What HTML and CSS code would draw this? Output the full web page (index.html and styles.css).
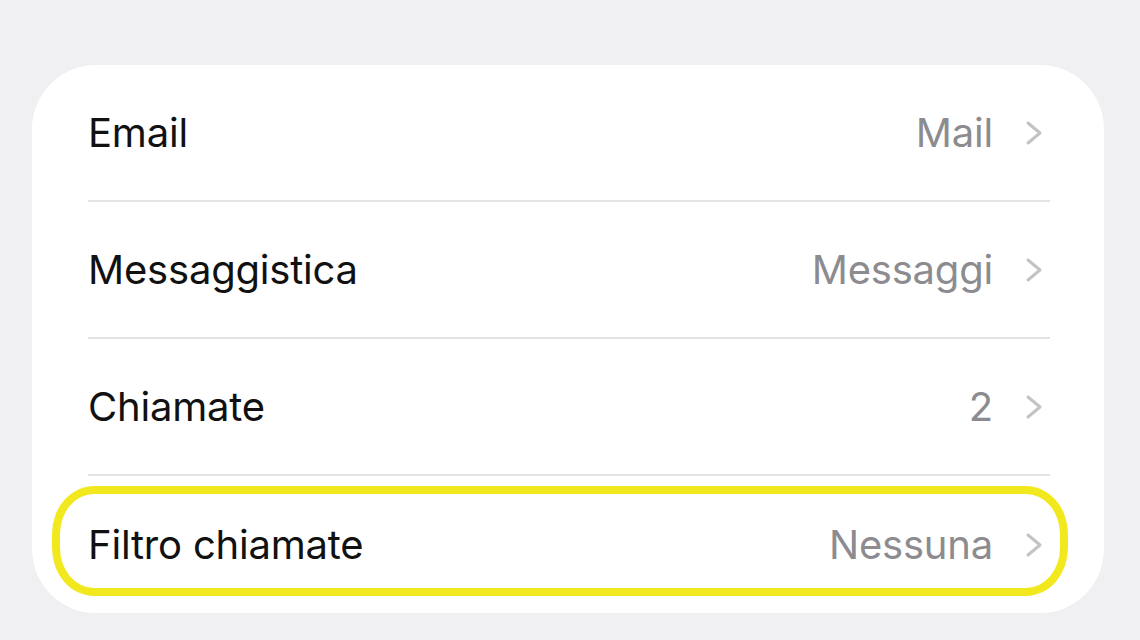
FILE: index.html
```html
<!DOCTYPE html>
<html lang="it">
<head>
<meta charset="utf-8">
<link rel="stylesheet" href="styles.css">
</head>
<body>
<div class="card">
  <div class="row">
    <span class="label">Email</span>
    <span class="value">Mail</span>
    <svg class="chev" viewBox="0 0 18 26"><path d="M3 3 L15 13 L3 23"/></svg>
  </div>
  <div class="row">
    <span class="label">Messaggistica</span>
    <span class="value">Messaggi</span>
    <svg class="chev" viewBox="0 0 18 26"><path d="M3 3 L15 13 L3 23"/></svg>
  </div>
  <div class="row">
    <span class="label">Chiamate</span>
    <span class="value">2</span>
    <svg class="chev" viewBox="0 0 18 26"><path d="M3 3 L15 13 L3 23"/></svg>
  </div>
  <div class="row last">
    <span class="label">Filtro chiamate</span>
    <span class="value">Nessuna</span>
    <svg class="chev" viewBox="0 0 18 26"><path d="M3 3 L15 13 L3 23"/></svg>
    <div class="highlight"></div>
  </div>
</div>
</body>
</html>
```
FILE: styles.css
```css
html, body {
  margin: 0;
  padding: 0;
  background: #f0f0f3;
  width: 1140px;
  height: 640px;
  overflow: hidden;
}
body {
  font-family: Inter, "Noto Sans", sans-serif;
  padding-top: 65px;
  box-sizing: border-box;
}
.card {
  margin-left: 32px;
  width: 1072px;
  background: #fff;
  border-radius: 64px;
  padding-left: 56px;
  padding-right: 54px;
  box-sizing: border-box;
}
.row {
  position: relative;
  height: 135px;
  display: flex;
  align-items: center;
  padding-right: 7px;
  border-bottom: 2px solid #e3e3e6;
}
.row.last {
  border-bottom: none;
  height: 137px;
}
.label {
  flex: 1;
  font-size: 40px;
  color: #111;
  letter-spacing: -0.2px;
}
.value {
  font-size: 40px;
  color: #8c8c90;
  margin-right: 32px;
  letter-spacing: -0.2px;
}
.chev {
  width: 18px;
  height: 26px;
  fill: none;
  stroke: #c3c3c7;
  stroke-width: 3;
  stroke-linecap: round;
  stroke-linejoin: round;
}
.highlight {
  position: absolute;
  left: -36px;
  top: 10px;
  width: 1016px;
  height: 110px;
  box-sizing: border-box;
  border: 8px solid #f2e81e;
  border-radius: 42px / 48px;
}
```
